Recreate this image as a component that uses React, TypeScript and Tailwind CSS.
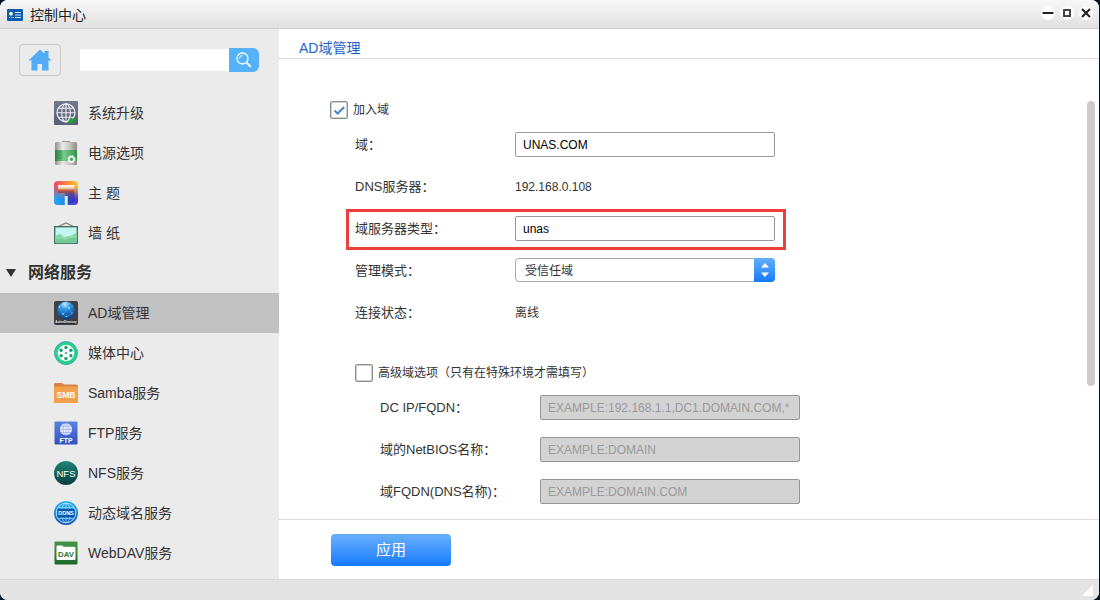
import { useState, type ReactNode } from "react";

function Icon({ children }: { children: ReactNode }) {
  return (
    <svg viewBox="0 0 24 24" className="h-6 w-6 shrink-0" aria-hidden="true">
      {children}
    </svg>
  );
}

function Gradient({ id, from, to }: { id: string; from: string; to: string }) {
  return (
    <defs>
      <linearGradient id={id} x1="0" y1="0" x2="0" y2="1">
        <stop offset="0" stopColor={from} />
        <stop offset="1" stopColor={to} />
      </linearGradient>
    </defs>
  );
}

const iconText = {
  textAnchor: "middle" as const,
  fontFamily: "Liberation Sans, Arial, sans-serif",
  fill: "#fff",
};

function UpgradeIcon() {
  return (
    <Icon>
      <Gradient id="upgrade" from="#74788f" to="#5a5d74" />
      <rect width="24" height="24" rx="1" fill="url(#upgrade)" />
      <g fill="none" stroke="#eef0f6" strokeWidth="1.100">
        <circle cx="12" cy="11.800" r="9" strokeWidth="1.300" />
        <ellipse cx="12" cy="11.800" rx="4.300" ry="9" />
        <path d="M12 2.800v18M3 11.800h18M4.300 7.300h15.400M4.300 16.300h15.400" />
      </g>
      <path d="M21.500 16.500l-1 4-3.500 1.800-4-.3 3-3.500z" fill="#18a52e" />
    </Icon>
  );
}

function PowerIcon() {
  return (
    <Icon>
      <defs>
        <linearGradient id="metal">
          <stop offset="0" stopColor="#8f8c88" />
          <stop offset=".35" stopColor="#edebe8" />
          <stop offset=".7" stopColor="#c2bfbb" />
          <stop offset="1" stopColor="#8d8a86" />
        </linearGradient>
        <linearGradient id="charge">
          <stop offset="0" stopColor="#278040" />
          <stop offset=".4" stopColor="#7ccb8b" />
          <stop offset="1" stopColor="#2f9149" />
        </linearGradient>
      </defs>
      <path d="M8 0h8v2H8z" fill="#9a9793" />
      <rect x="1" y="1" width="22" height="23" rx="1.500" fill="url(#metal)" />
      <path d="M1 9h22v11H1z" fill="url(#charge)" />
      <path d="M2 11h6M2 14h6M2 17h6" stroke="#2c8645" strokeWidth=".6" />
      <circle cx="17.500" cy="18.300" r="2.500" fill="#47a45e" stroke="#fff" strokeWidth="1.500" />
      <circle cx="17.500" cy="18.300" r="3.700" fill="none" stroke="#fff" strokeWidth="1" strokeDasharray="1.500 1.400" />
    </Icon>
  );
}

function ThemeIcon() {
  return (
    <Icon>
      <defs>
        <linearGradient id="themeTop">
          <stop offset="0" stopColor="#f0456a" />
          <stop offset=".5" stopColor="#ff8142" />
          <stop offset="1" stopColor="#ffc928" />
        </linearGradient>
        <linearGradient id="themeBottom">
          <stop offset="0" stopColor="#21aaf0" />
          <stop offset=".45" stopColor="#2187ef" />
          <stop offset="1" stopColor="#552bdc" />
        </linearGradient>
        <linearGradient id="themeFade" x1="0" y1="0" x2="0" y2="1">
          <stop offset=".2" stopColor="#fff" stopOpacity="0" />
          <stop offset=".75" stopColor="#fff" />
        </linearGradient>
        <linearGradient id="roller" x1="0" y1="0" x2="0" y2="1">
          <stop offset="0" stopColor="#fffaf0" />
          <stop offset=".4" stopColor="#f8d3b4" />
          <stop offset=".65" stopColor="#c9644a" />
          <stop offset="1" stopColor="#8d3a40" />
        </linearGradient>
        <mask id="themeMask">
          <rect width="24" height="24" fill="url(#themeFade)" />
        </mask>
      </defs>
      <rect width="24" height="24" rx="4" fill="url(#themeTop)" />
      <rect width="24" height="24" rx="4" fill="url(#themeBottom)" mask="url(#themeMask)" />
      <path d="M13.500 11.500h7V21l-7 3z" fill="#2a1f86" opacity=".5" />
      <rect x="4" y="4" width="16.500" height="7.800" rx=".5" fill="url(#roller)" />
      <path d="M11 11.800h2.500V15H11z" fill="#6a4a8c" />
      <path d="M10.800 15h2.900v9h-2.900z" fill="#e4eafb" />
    </Icon>
  );
}

function WallpaperIcon() {
  return (
    <Icon>
      <path d="M4.500 5.500L12 2l7.500 3.500" fill="none" stroke="#8b7d72" strokeWidth="1.200" />
      <rect x=".7" y="5.700" width="22.600" height="16.500" fill="#c2f7f0" stroke="#3f6659" strokeWidth="1.300" />
      <path d="M1.400 16c2.500-4 5-4 7.600-.5 2 1.500 3.500-.5 5.500-.5 3 .5 4.500-2.500 8.100-3v9.500H1.400z" fill="#8adaa5" />
      <path d="M1.400 18.500c5-2 8 1.500 12-.5 3-1.500 6-.5 9.200-1.500v5H1.400z" fill="#70cb96" />
    </Icon>
  );
}

function DomainIcon() {
  return (
    <Icon>
      <defs>
        <radialGradient id="sphere" cx=".45" cy=".15" r=".85">
          <stop offset="0" stopColor="#b9edff" />
          <stop offset=".35" stopColor="#2b93e0" />
          <stop offset="1" stopColor="#063a86" />
        </radialGradient>
      </defs>
      <rect width="24" height="24" rx="2" fill="#3f4046" />
      <circle cx="12" cy="9.500" r="9" fill="url(#sphere)" />
      <path d="M5 6l5-3 5 4 4-2M5 6l4 7 6-6 3 6-6 3-3-3" fill="none" stroke="#8fd3fa" strokeWidth=".3" />
      <g fill="#e8faff">
        <circle cx="5.500" cy="6" r=".7" /><circle cx="10" cy="3" r=".7" />
        <circle cx="15" cy="7" r=".7" /><circle cx="9" cy="13" r=".7" />
        <circle cx="18" cy="12" r=".6" /><circle cx="12.500" cy="15.500" r=".5" />
      </g>
      <path d="M1 19.500h22V23H1z" fill="#282a31" />
      <text x="12" y="22.300" fontSize="2.900" fontWeight="700" {...iconText}>ActiveDirectory</text>
    </Icon>
  );
}

function MediaIcon() {
  return (
    <Icon>
      <circle cx="12" cy="12" r="11.500" fill="#22d484" stroke="#4a8fc4" strokeWidth=".8" />
      <circle cx="12" cy="12" r="8.300" fill="#fff" />
      <g fill="#14a36d">
        <circle cx="12" cy="6.500" r="1.700" /><circle cx="16.900" cy="9.200" r="1.700" />
        <circle cx="16.900" cy="14.800" r="1.700" /><circle cx="12" cy="17.500" r="1.700" />
        <circle cx="7.100" cy="14.800" r="1.700" /><circle cx="7.100" cy="9.200" r="1.700" />
        <circle cx="12" cy="12" r="1" />
      </g>
    </Icon>
  );
}

function SambaIcon() {
  return (
    <Icon>
      <path d="M0 3.500Q0 2 1.500 2H8l2 1.500h12.500Q24 3.500 24 5V12H0z" fill="#d98243" />
      <rect y="5.500" width="24" height="16.500" rx="1" fill="#f1a14d" />
      <text x="12" y="17" fontSize="8.500" fontWeight="700" {...iconText}>SMB</text>
    </Icon>
  );
}

function FtpIcon() {
  return (
    <Icon>
      <Gradient id="ftp" from="#5c83df" to="#3150c2" />
      <rect x=".5" y=".5" width="23" height="23" rx="1" fill="url(#ftp)" />
      <circle cx="12" cy="8.300" r="6" fill="#f3f6ff" />
      <g fill="none" stroke="#8aa0e3" strokeWidth=".7">
        <path d="M12 2.300v12M6 8.300h12M7 5.200h10M7 11.400h10" />
        <ellipse cx="12" cy="8.300" rx="3" ry="6" />
      </g>
      <text x="12" y="22" fontSize="6.800" fontWeight="700" {...iconText}>FTP</text>
    </Icon>
  );
}

function NfsIcon() {
  return (
    <Icon>
      <Gradient id="nfs" from="#1d8577" to="#083e40" />
      <circle cx="12" cy="12" r="12" fill="url(#nfs)" />
      <text x="12" y="15.500" fontSize="9.500" {...iconText}>NFS</text>
    </Icon>
  );
}

function DdnsIcon() {
  return (
    <Icon>
      <Gradient id="ddns" from="#26b5ef" to="#1752bf" />
      <circle cx="12" cy="12" r="12" fill="url(#ddns)" />
      <g fill="none" stroke="#a4e0fa" strokeWidth=".7">
        <circle cx="12" cy="12" r="9.800" strokeWidth="1" />
        <ellipse cx="12" cy="12" rx="4.500" ry="9.800" />
        <path d="M12 2.200v19.600M4 6.500h16M4 17.500h16" />
      </g>
      <rect x="3.500" y="8" width="17" height="8" rx="1" fill="#0d56a9" />
      <text x="12" y="14" fontSize="5.500" fontWeight="700" {...iconText}>DDNS</text>
    </Icon>
  );
}

function WebdavIcon() {
  return (
    <Icon>
      <Gradient id="dav" from="#46944a" to="#1f672b" />
      <rect x=".5" y=".5" width="23" height="23" rx="1" fill="url(#dav)" />
      <path d="M2.500 5.500Q2.500 4.500 3.500 4.500h5l1 1.200h11q1 0 1 1V18q0 1-1 1h-17q-1 0-1-1z" fill="#fff" />
      <text x="12" y="15.700" fontSize="7.800" fontWeight="700" {...iconText} fill="#2e7437">DAV</text>
    </Icon>
  );
}

const systemItems = [
  { label: "系统升级", icon: <UpgradeIcon /> },
  { label: "电源选项", icon: <PowerIcon /> },
  { label: "主 题", icon: <ThemeIcon /> },
  { label: "墙 纸", icon: <WallpaperIcon /> },
];

const networkItems = [
  { label: "AD域管理", icon: <DomainIcon /> },
  { label: "媒体中心", icon: <MediaIcon /> },
  { label: "Samba服务", icon: <SambaIcon /> },
  { label: "FTP服务", icon: <FtpIcon /> },
  { label: "NFS服务", icon: <NfsIcon /> },
  { label: "动态域名服务", icon: <DdnsIcon /> },
  { label: "WebDAV服务", icon: <WebdavIcon /> },
];

function NavItem({ label, icon, active }: { label: string; icon: ReactNode; active?: boolean }) {
  return (
    <li>
      <a
        href="#"
        aria-current={active ? "page" : undefined}
        className={`flex h-10 items-center gap-2.5 pl-[54px] text-sm text-[#333] ${active ? "bg-[#c1c1c1]" : ""}`}
      >
        {icon}
        <span>{label}</span>
      </a>
    </li>
  );
}

function TitleBar() {
  const control = "flex h-3.5 w-3.5 items-center justify-center rounded-full bg-white";
  return (
    <header className="flex h-[29px] shrink-0 items-center justify-between border-b border-[#cfcfcf] bg-linear-to-b from-[#f8f8f8] to-[#e0e0e0] pr-1.5 pl-[7px]">
      <div className="flex items-center gap-[7px] pt-0.5">
        <svg viewBox="0 0 16 12" className="h-3 w-4" aria-hidden="true">
          <rect width="16" height="12" rx="1" fill="#0b5cab" />
          <circle cx="4" cy="4.800" r="2" fill="#e9f3d0" />
          <path d="M8 3.500h6M8 6h6M8 8.500h6" stroke="#cfe6f8" />
          <path d="M2 8.500h5" stroke="#cfe6f8" strokeDasharray="1 .8" />
        </svg>
        <h1 className="text-sm text-[#222]">控制中心</h1>
      </div>
      <div className="flex gap-[5px] pb-0.5">
        <button type="button" aria-label="最小化" className={control}>
          <svg viewBox="0 0 14 14" className="h-3.5 w-3.5"><path d="M1.500 7h11" stroke="#222" strokeWidth="2" /></svg>
        </button>
        <button type="button" aria-label="最大化" className={control}>
          <svg viewBox="0 0 14 14" className="h-3.5 w-3.5"><path d="M4 4h6v6H4z" fill="none" stroke="#444" strokeWidth="2" /></svg>
        </button>
        <button type="button" aria-label="关闭" className={control}>
          <svg viewBox="0 0 14 14" className="h-3.5 w-3.5"><path d="M3 3l8 8M11 3l-8 8" stroke="#222" strokeWidth="2" /></svg>
        </button>
      </div>
    </header>
  );
}

function Sidebar() {
  return (
    <aside className="w-[279px] shrink-0 bg-[#ebebeb]">
      <div className="flex h-16 items-start pt-[15px] pl-[19px]">
        <button type="button" aria-label="主页" className="flex h-8 w-[42px] items-center justify-center rounded border border-[#c9c5c9]">
          <svg viewBox="0 0 24 22" className="h-[22px] w-6" aria-hidden="true">
            <path d="M12 .5L.5 11.500h3V21.500h6v-6.500h4.500v6.500h6.500V11.500h3L20.500 8.500V2h-4.200v2.500z" fill="#53adf6" />
          </svg>
        </button>
        <form className="flex items-center pt-1 pl-[19px]" onSubmit={(e) => e.preventDefault()}>
          <input type="text" aria-label="搜索" className="h-[22px] w-[149px] bg-white px-2 text-xs outline-none" />
          <button type="submit" aria-label="搜索" className="flex h-6 w-[30px] items-center justify-center rounded-r-md bg-[#55b2f9]">
            <svg viewBox="0 0 16 16" className="h-4 w-4" fill="none" stroke="#fff" aria-hidden="true">
              <circle cx="6.500" cy="6.500" r="5.500" strokeWidth="1.300" />
              <path d="M3.500 6.500a3 3 0 0 1 3-3" />
              <path d="M10.800 10.800l4 4" strokeWidth="1.900" />
            </svg>
          </button>
        </form>
      </div>
      <nav>
        <ul>
          {systemItems.map((item) => <NavItem key={item.label} {...item} />)}
        </ul>
        <button type="button" className="flex h-10 w-full items-center gap-3 pl-1.5 text-base font-bold text-[#333]">
          <svg viewBox="0 0 10 8" className="h-2 w-2.5" aria-hidden="true"><path d="M0 0h10L5 8z" fill="#333" /></svg>
          网络服务
        </button>
        <ul>
          {networkItems.map((item, i) => <NavItem key={item.label} {...item} active={i === 0} />)}
        </ul>
      </nav>
    </aside>
  );
}

function CheckField({ id, label, initial = false }: { id: string; label: string; initial?: boolean }) {
  const [checked, setChecked] = useState(initial);
  return (
    <div className="flex h-7 items-center gap-[5px]">
      <span className="grid h-[18px] w-[18px]">
        <input
          id={id}
          type="checkbox"
          checked={checked}
          onChange={(e) => setChecked(e.target.checked)}
          className="col-start-1 row-start-1 h-[18px] w-[18px] appearance-none rounded-xs border border-[#8f8f8f] bg-white shadow-[inset_0_0_0_1px_#cfcfcf]"
        />
        {checked && (
          <svg viewBox="0 0 18 18" className="pointer-events-none col-start-1 row-start-1 h-[18px] w-[18px]" aria-hidden="true">
            <path d="M4.500 9.500l3.200 3 6.500-6.500" fill="none" stroke="#4487cf" strokeWidth="2" />
          </svg>
        )}
      </span>
      <label htmlFor={id} className="text-xs text-[#333]">{label}</label>
    </div>
  );
}

function Row({ label, htmlFor, highlighted, children }: { label: string; htmlFor?: string; highlighted?: boolean; children: ReactNode }) {
  const name = "w-40 shrink-0 text-[13px] leading-[25px] text-[#333]";
  return (
    <div className="relative flex h-[42px] w-fit items-start pt-2">
      {htmlFor ? <label htmlFor={htmlFor} className={name}>{label}</label> : <span className={name}>{label}</span>}
      {children}
      {highlighted && <div className="pointer-events-none absolute top-px -right-[11px] bottom-0 -left-[9px] border-3 border-[#ec3f3d]" />}
    </div>
  );
}

function DomainForm() {
  const field = "h-[25px] w-[260px] rounded-xs border border-[#999] bg-white px-[7px] text-xs text-black outline-none";
  const disabledField = "h-[25px] w-[260px] rounded-xs border border-[#959595] bg-[#d3d3d3] px-[7px] text-xs placeholder:text-[#9a9a9a]";
  const value = "text-xs leading-[26px] text-[#333]";
  return (
    <div className="flex-1 pt-[37px] pl-[51px]">
      <CheckField id="join" label="加入域" initial />
      <div className="pl-[25px]">
        <Row label="域：" htmlFor="domain">
          <input id="domain" type="text" defaultValue="UNAS.COM" className={field} />
        </Row>
        <Row label="DNS服务器：">
          <span className={value}>192.168.0.108</span>
        </Row>
        <Row label="域服务器类型：" htmlFor="serverType" highlighted>
          <input id="serverType" type="text" defaultValue="unas" className={field} />
        </Row>
        <Row label="管理模式：" htmlFor="mode">
          <div className="grid h-6 w-[260px]">
            <select id="mode" className="col-start-1 row-start-1 appearance-none rounded-sm border border-[#a9a9a9] bg-white pt-px pl-[9px] text-xs text-[#333] outline-none">
              <option>受信任域</option>
            </select>
            <span className="pointer-events-none col-start-1 row-start-1 flex w-[21px] items-center justify-center justify-self-end rounded-r-sm bg-linear-to-b from-[#62aefc] to-[#0f7af9]">
              <svg viewBox="0 0 8 14" className="h-3.5 w-2" aria-hidden="true"><path d="M0 4.500L4 0l4 4.500zM0 9.500h8L4 14z" fill="#fff" /></svg>
            </span>
          </div>
        </Row>
        <Row label="连接状态：">
          <span className={value}>离线</span>
        </Row>
        <div className="mt-[25px]">
          <CheckField id="advanced" label="高级域选项（只有在特殊环境才需填写）" />
          <div className="pl-[25px]">
            <Row label="DC IP/FQDN：" htmlFor="dc">
              <input id="dc" type="text" disabled placeholder="EXAMPLE:192.168.1.1,DC1.DOMAIN.COM,*" className={disabledField} />
            </Row>
            <Row label="域的NetBIOS名称：" htmlFor="netbios">
              <input id="netbios" type="text" disabled placeholder="EXAMPLE:DOMAIN" className={disabledField} />
            </Row>
            <Row label="域FQDN(DNS名称)：" htmlFor="fqdn">
              <input id="fqdn" type="text" disabled placeholder="EXAMPLE:DOMAIN.COM" className={disabledField} />
            </Row>
          </div>
        </div>
      </div>
    </div>
  );
}

export default function App() {
  return (
    <div className="flex min-h-screen flex-col bg-[#081522] pr-px font-['Liberation_Sans','Noto_Sans_CJK_SC',sans-serif]">
      <div className="flex flex-1 flex-col overflow-hidden rounded-lg bg-white">
        <TitleBar />
        <div className="flex flex-1">
          <Sidebar />
          <main className="flex min-w-0 flex-1 flex-col">
            <h2 className="flex h-[30px] shrink-0 items-end border-b border-[#dcdcdc] pl-5 text-sm text-[#1b62c8]">AD域管理</h2>
            <div className="flex flex-1 justify-between">
              <DomainForm />
              <div className="mt-[42px] mr-1 h-[285px] w-2 rounded-full bg-[#cbcbcb]" />
            </div>
            <div className="flex h-[60px] shrink-0 items-center border-t border-[#dcdcdc] pl-[52px]">
              <button type="button" className="h-8 w-[120px] rounded bg-linear-to-b from-[#68b0fc] to-[#0a7bfd] pt-0.5 text-[15px] text-white">应用</button>
            </div>
          </main>
        </div>
        <footer className="flex h-[21px] shrink-0 items-center justify-end border-t border-[#dadada] bg-[#e4e4e4] pr-1.5">
          <svg viewBox="0 0 11 11" className="h-[11px] w-[11px]" aria-hidden="true"><path d="M11 0v11H0z" fill="#fff" /></svg>
        </footer>
      </div>
    </div>
  );
}
